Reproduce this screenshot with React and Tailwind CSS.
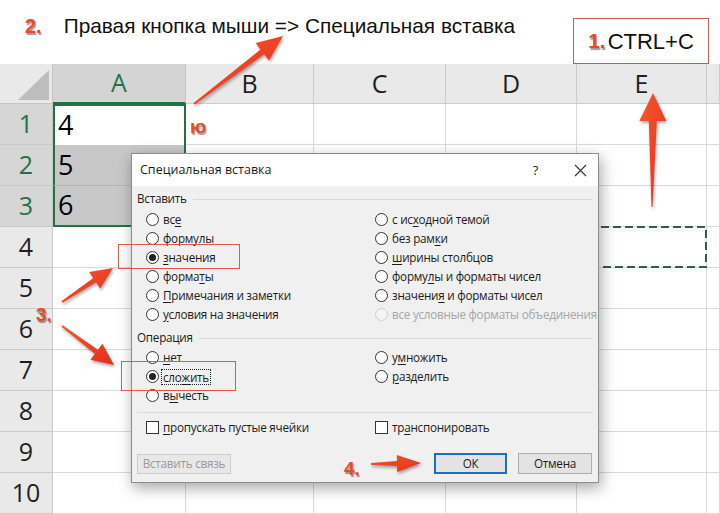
import React from 'react'

const COLS = ['A', 'B', 'C', 'D', 'E', '']
const ROWS = [1, 2, 3, 4, 5, 6, 7, 8, 9, 10]
const VALUES = { 1: '4', 2: '5', 3: '6' }

// tapered arrow as one polygon: tail -> tip
function Arrow({ x1, y1, x2, y2, hl, hw, tw0, tw1 }) {
  const dx = x2 - x1
  const dy = y2 - y1
  const len = Math.hypot(dx, dy)
  const ux = dx / len
  const uy = dy / len
  const nx = -uy
  const ny = ux
  const bx = x2 - ux * hl
  const by = y2 - uy * hl
  const p = (x, y, w) => `${(x + nx * w).toFixed(1)},${(y + ny * w).toFixed(1)}`
  const pts = [
    p(x1, y1, tw0 / 2),
    p(bx, by, tw1 / 2),
    p(bx, by, hw / 2),
    `${x2},${y2}`,
    p(bx, by, -hw / 2),
    p(bx, by, -tw1 / 2),
    p(x1, y1, -tw0 / 2),
  ]
  return <polygon points={pts.join(' ')} fill="url(#arrowFill)" />
}

function Step({ n, className = '' }) {
  return (
    <span
      className={`font-['Liberation_Sans',Arial,sans-serif] font-bold text-[#e84a26] [text-shadow:1px_1.5px_1px_rgba(0,0,0,0.4)] ${className}`}
    >
      {n}
    </span>
  )
}

function Label({ t, u }) {
  // t: text, u: index of the underlined (mnemonic) letter
  if (u === undefined) return <span>{t}</span>
  return (
    <span>
      {t.slice(0, u)}
      <span className="underline underline-offset-2">{t[u]}</span>
      {t.slice(u + 1)}
    </span>
  )
}

function Radio({ t, u, checked, disabled, focus }) {
  return (
    <div className="flex items-center h-[19px] whitespace-nowrap">
      <span
        className={`w-[13px] h-[13px] rounded-full border flex items-center justify-center mr-[4px] shrink-0 ${
          disabled ? 'border-[#cfcfcf] bg-[#f4f4f4]' : 'border-[#333] bg-white'
        }`}
      >
        {checked && <span className="w-[7px] h-[7px] rounded-full bg-[#222]" />}
      </span>
      <span
        className={`${disabled ? 'text-[#a6a6a6]' : ''} ${
          focus ? 'border border-dotted border-[#222] px-[1px] -ml-[2px] leading-[14px]' : ''
        }`}
      >
        <Label t={t} u={u} />
      </span>
    </div>
  )
}

function Check({ t, u }) {
  return (
    <div className="flex items-center h-[19px] whitespace-nowrap">
      <span className="w-[13px] h-[13px] border border-[#333] bg-white mr-[4px] shrink-0" />
      <Label t={t} u={u} />
    </div>
  )
}

function Section({ title }) {
  return (
    <div className="flex items-center h-[20px] pl-[5px] pr-[6px]">
      <span>{title}</span>
      <div className="flex-1 h-px bg-[#d9d9d9] ml-[6px]" />
    </div>
  )
}

function Dialog() {
  return (
    <div className="absolute left-[131px] top-[153px] w-[468px] h-[330px] bg-[#f0f0f0] border border-[#8c8c8c] shadow-[2px_5px_14px_rgba(0,0,0,0.35)] flex flex-col font-['Open_Sans',sans-serif] text-[11.7px] tracking-[-0.25px] text-[#1c1c1c] leading-none">
      <div className="h-[32px] bg-white flex items-center pl-[8px] pr-[11px] shrink-0">
        <span className="text-[12.5px] tracking-normal">Специальная вставка</span>
        <span className="ml-auto mr-[36px] text-[13px]">?</span>
        <svg width="13" height="13" viewBox="0 0 13 13">
          <path d="M1 1 L12 12 M12 1 L1 12" stroke="#333" strokeWidth="1.1" />
        </svg>
      </div>

      <div className="mt-[3px]">
        <Section title="Вставить" />
      </div>
      <div className="mt-[1px] grid grid-cols-[229px_1fr] pl-[14px]">
        <div className="flex flex-col">
          <Radio t="все" u={2} />
          <Radio t="формулы" />
          <Radio t="значения" u={0} checked />
          <Radio t="форматы" u={5} />
          <Radio t="Примечания и заметки" u={0} />
          <Radio t="условия на значения" u={0} />
        </div>
        <div className="flex flex-col">
          <Radio t="с исходной темой" u={4} />
          <Radio t="без рамки" u={7} />
          <Radio t="ширины столбцов" u={0} />
          <Radio t="формулы и форматы чисел" u={5} />
          <Radio t="значения и форматы чисел" u={7} />
          <Radio t="все условные форматы объединения" disabled />
        </div>
      </div>

      <div className="mt-[4px]">
        <Section title="Операция" />
      </div>
      <div className="grid grid-cols-[229px_1fr] pl-[14px]">
        <div className="flex flex-col">
          <Radio t="нет" u={0} />
          <Radio t="сложить" u={3} checked focus />
          <Radio t="вычесть" u={1} />
        </div>
        <div className="flex flex-col">
          <Radio t="умножить" u={1} />
          <Radio t="разделить" u={0} />
        </div>
      </div>

      <div className="mt-[7px] mx-[5px] h-px bg-[#d9d9d9]" />
      <div className="mt-[5px] grid grid-cols-[229px_1fr] pl-[14px]">
        <Check t="пропускать пустые ячейки" u={0} />
        <Check t="транспонировать" u={2} />
      </div>

      <div className="mt-[16px] flex items-center pl-[5px] pr-[6px]">
        <div className="w-[94px] h-[20px] border border-[#cdcdcd] bg-[#e8e8e8] text-[#9a9a9a] flex items-center justify-center">
          Вставить связь
        </div>
        <div className="ml-auto w-[73px] h-[21px] border-2 border-[#1a6fc4] bg-[#e3e3e3] flex items-center justify-center">
          ОК
        </div>
        <div className="ml-[11px] w-[74px] h-[21px] border border-[#adadad] bg-[#e3e3e3] flex items-center justify-center">
          Отмена
        </div>
      </div>
    </div>
  )
}

function Sheet() {
  return (
    <div className="grid grid-cols-[53px_133px_128px_132px_131px_130px_1fr] grid-rows-[40px_repeat(10,41px)] font-['Open_Sans',sans-serif]">
      {/* corner */}
      <div className="bg-[#e9e9e9] border-r border-b border-[#c4c4c4] flex items-end justify-end pr-[3px] pb-[3px]">
        <svg width="31" height="30" viewBox="0 0 31 30">
          <polygon points="31,0 31,30 0,30" fill="#bdbdbd" />
        </svg>
      </div>
      {COLS.map((c) =>
        c === 'A' ? (
          <div
            key="hA"
            className="bg-[#d4d4d4] border-r border-[#c4c4c4] border-b-2 border-b-[#217346] flex items-center justify-center text-[25px] text-[#217346]"
          >
            A
          </div>
        ) : (
          <div
            key={'h' + c}
            className="bg-[#e9e9e9] border-r border-b border-[#cdcdcd] flex items-center justify-center text-[25px] text-[#1f1f1f]"
          >
            {c}
          </div>
        )
      )}

      {ROWS.map((r) => {
        const sel = r <= 3
        return (
          <React.Fragment key={r}>
            <div
              className={`border-r border-b border-[#c9c9c9] flex items-center justify-center text-[25px] ${
                sel ? 'bg-[#d6d6d6] text-[#217346]' : 'bg-[#e9e9e9] text-[#1f1f1f]'
              }`}
            >
              {r}
            </div>
            {COLS.map((c) => {
              if (c === 'A' && sel) {
                const edge =
                  r === 1
                    ? 'border-x-2 border-t-2 border-[#217346] border-b-0'
                    : r === 3
                    ? 'border-x-2 border-b-2 border-[#217346]'
                    : 'border-x-2 border-[#217346] border-b border-b-[#b5b5b5]'
                return (
                  <div
                    key={c}
                    className={`${edge} ${
                      r === 1 ? 'bg-white' : 'bg-[#c8c8c8]'
                    } flex items-center pl-[3px] text-[27px] text-black`}
                  >
                    {VALUES[r]}
                  </div>
                )
              }
              if (c === 'E' && r === 4) {
                return (
                  <div key={c} className="relative border-r border-b border-[#dadada]">
                    <svg className="absolute -left-px -top-px" width="131" height="42">
                      <rect
                        x="1"
                        y="1"
                        width="129"
                        height="40"
                        fill="none"
                        stroke="#2f5f47"
                        strokeWidth="2"
                        strokeDasharray="8 4"
                      />
                    </svg>
                  </div>
                )
              }
              return <div key={c} className="border-r border-b border-[#dadada] bg-white" />
            })}
          </React.Fragment>
        )
      })}
    </div>
  )
}

export default function App() {
  return (
    <div className="relative w-[720px] h-[514px] overflow-hidden bg-white">
      <div className="h-[64px] flex items-start font-['Liberation_Sans',Arial,sans-serif]">
        <Step n="2." className="ml-[25px] mt-[11px] text-[20px]" />
        <span className="ml-[22px] mt-[10px] text-[20.8px] text-[#111]">
          Правая кнопка мыши =&gt; Специальная вставка
        </span>
        <div className="ml-auto mr-[11px] mt-[18px] w-[136px] h-[46px] border border-[#cf5a52] flex items-center justify-center">
          <Step n="1." className="text-[21px] mr-[2px]" />
          <span className="text-[22px] text-[#111]">CTRL+C</span>
        </div>
      </div>

      <Sheet />

      <Step n="ю" className="absolute left-[190px] top-[113px] text-[19px]" />

      <Dialog />

      {/* annotation boxes */}
      <div className="absolute left-[118px] top-[244px] w-[122px] h-[25px] border border-[#db5a4c]" />
      <div className="absolute left-[121px] top-[361px] w-[115px] h-[30px] border border-[#db5a4c]" />

      <Step n="3." className="absolute left-[36px] top-[301px] text-[19px]" />
      <Step n="4." className="absolute left-[344px] top-[455px] text-[19px]" />

      <svg
        className="absolute inset-0 pointer-events-none drop-shadow-[1px_2px_1.5px_rgba(0,0,0,0.35)]"
        width="720"
        height="514"
      >
        <defs>
          <linearGradient id="arrowFill" x1="0" y1="0" x2="1" y2="1">
            <stop offset="0" stopColor="#f6582e" />
            <stop offset="1" stopColor="#e52e1b" />
          </linearGradient>
        </defs>
        <Arrow x1={194} y1={104} x2={283} y2={36} hl={26} hw={22} tw0={2} tw1={6} />
        <Arrow x1={652} y1={207} x2={653} y2={93} hl={28} hw={27} tw0={1} tw1={8} />
        <Arrow x1={62} y1={302} x2={113} y2={268} hl={22} hw={20} tw0={2} tw1={5} />
        <Arrow x1={62} y1={326} x2={114} y2={365} hl={22} hw={20} tw0={2} tw1={5} />
        <Arrow x1={371} y1={464} x2={421} y2={463} hl={24} hw={17} tw0={2} tw1={5} />
      </svg>
    </div>
  )
}
